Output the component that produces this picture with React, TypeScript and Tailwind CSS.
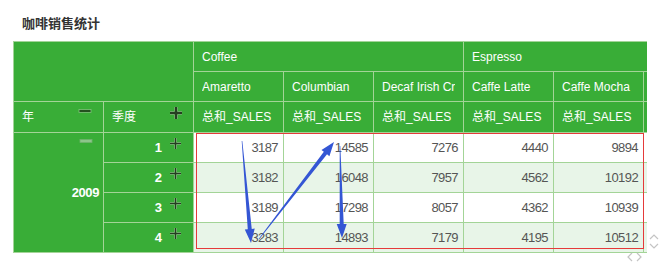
import React from "react";

const products = [
  "Amaretto",
  "Columbian",
  "Decaf Irish Cream",
  "Caffe Latte",
  "Caffe Mocha",
  "Regular Espresso",
];

const rows = [
  { q: 1, values: [3187, 14585, 7276, 4440, 9894, 1580] },
  { q: 2, values: [3182, 16048, 7957, 4562, 10192, 1490] },
  { q: 3, values: [3189, 17298, 8057, 4362, 10939, 1520] },
  { q: 4, values: [3283, 14893, 7179, 4195, 10512, 1630] },
];

// tapered arrow: thin tail, wide shaft near the head
function arrowPoints(x1: number, y1: number, x2: number, y2: number) {
  const dx = x2 - x1;
  const dy = y2 - y1;
  const len = Math.sqrt(dx * dx + dy * dy);
  const ux = dx / len;
  const uy = dy / len;
  const nx = -uy;
  const ny = ux;
  const head = 14;
  const bx = x2 - ux * head;
  const by = y2 - uy * head;
  const pts = [
    [x1 + nx * 0.3, y1 + ny * 0.3],
    [bx + nx * 2, by + ny * 2],
    [bx + nx * 5, by + ny * 5],
    [x2, y2],
    [bx - nx * 5, by - ny * 5],
    [bx - nx * 2, by - ny * 2],
    [x1 - nx * 0.3, y1 - ny * 0.3],
  ];
  return pts.map((p) => p.join(",")).join(" ");
}

function Minus({ light }: { light?: boolean }) {
  return (
    <svg width="14" height="6" viewBox="0 0 14 6" className="block">
      <rect
        x="1"
        y="1.5"
        width="12"
        height="3"
        fill={light ? "#8dc58a" : "#24511f"}
        stroke={light ? "#6fb26b" : "#7fc47a"}
        strokeWidth="0.8"
      />
    </svg>
  );
}

function Plus({ big }: { big?: boolean }) {
  const s = big ? 12 : 11;
  const w = big ? 2.4 : 1.4;
  return (
    <svg width={s + 2} height={s + 2} viewBox={`0 0 ${s + 2} ${s + 2}`} className="block">
      <g stroke="#7fc47a" strokeWidth={w + 1.6}>
        <line x1="1" y1={(s + 2) / 2} x2={s + 1} y2={(s + 2) / 2} />
        <line x1={(s + 2) / 2} y1="1" x2={(s + 2) / 2} y2={s + 1} />
      </g>
      <g stroke="#263f22" strokeWidth={w}>
        <line x1="1" y1={(s + 2) / 2} x2={s + 1} y2={(s + 2) / 2} />
        <line x1={(s + 2) / 2} y1="1" x2={(s + 2) / 2} y2={s + 1} />
      </g>
    </svg>
  );
}

export default function App() {
  const head = "bg-[#39ad37] text-white border border-[#a3d497] h-[30px] px-2 text-left font-normal whitespace-nowrap";
  return (
    <div className="relative w-[672px] h-[272px] bg-white font-['Liberation_Sans','Noto_Sans_CJK_SC',sans-serif] text-[12px]">
      <h1 className="pt-4 pl-[22px] text-[13px] leading-4 font-bold text-[#333]">咖啡销售统计</h1>

      <div className="relative mt-[9px] ml-[13px] w-[634px] overflow-hidden">
        <table className="table-fixed border-collapse w-[720px]">
          <colgroup>
            {Array.from({ length: 8 }).map((_, i) => (
              <col key={i} className="w-[90px]" />
            ))}
          </colgroup>
          <thead>
            <tr>
              <th colSpan={2} rowSpan={2} className={head}></th>
              <th colSpan={3} className={head}>Coffee</th>
              <th colSpan={3} className={head}>Espresso</th>
            </tr>
            <tr>
              {products.map((p) => (
                <th key={p} className={head}>
                  <div className="w-[73px] overflow-hidden">{p}</div>
                </th>
              ))}
            </tr>
            <tr>
              <th className={head}>
                <div className="flex items-start justify-between">
                  <span className="leading-[30px]">年</span>
                  <span className="mt-[6px] mr-[3px]"><Minus /></span>
                </div>
              </th>
              <th className={head}>
                <div className="flex items-start justify-between">
                  <span className="leading-[30px]">季度</span>
                  <span className="mt-[4px] mr-[2px]"><Plus big /></span>
                </div>
              </th>
              {products.map((p) => (
                <th key={p} className={head}>总和_SALES</th>
              ))}
            </tr>
          </thead>
          <tbody>
            {rows.map((r, i) => (
              <tr key={r.q}>
                {i === 0 && (
                  <td rowSpan={4} className="relative bg-[#39ad37] border border-[#a3d497] text-right align-middle pr-[4px] text-white font-bold text-[13px] tracking-[-0.4px]">
                    <span className="absolute top-[5px] right-[10px]"><Minus light /></span>
                    2009
                  </td>
                )}
                <td className="relative bg-[#39ad37] border border-[#a3d497] h-[30px] text-right pr-[31px] text-white font-bold text-[13px]">
                  <span className="absolute top-[4px] right-[11px]"><Plus /></span>
                  {r.q}
                </td>
                {r.values.map((v, j) => (
                  <td
                    key={j}
                    className={`border border-[#a3d497] h-[30px] text-right pr-[5px] text-[13px] tracking-[-0.6px] text-[#555] ${i % 2 === 1 ? "bg-[#e8f5e8]" : "bg-white"}`}
                  >
                    {v}
                  </td>
                ))}
              </tr>
            ))}
          </tbody>
        </table>
        <div className="absolute left-[183px] top-[92px] w-[448px] h-[116px] border border-[#e53a3a] pointer-events-none" />
      </div>

      <svg className="absolute inset-0 pointer-events-none" width="672" height="272">
        <polygon points={arrowPoints(242, 141, 251, 243)} fill="#3456d4" />
        <polygon points={arrowPoints(259, 239, 334, 142)} fill="#3456d4" />
        <polygon points={arrowPoints(340, 146, 342, 238)} fill="#3456d4" />
        <g fill="none" stroke="#c4c4c4" strokeWidth="1.2">
          <polyline points="650,239 654,235 658,239" />
          <polyline points="650,244 654,248 658,244" />
          <polyline points="632,253 628,257 632,261" />
          <polyline points="637,253 641,257 637,261" />
        </g>
      </svg>
    </div>
  );
}
